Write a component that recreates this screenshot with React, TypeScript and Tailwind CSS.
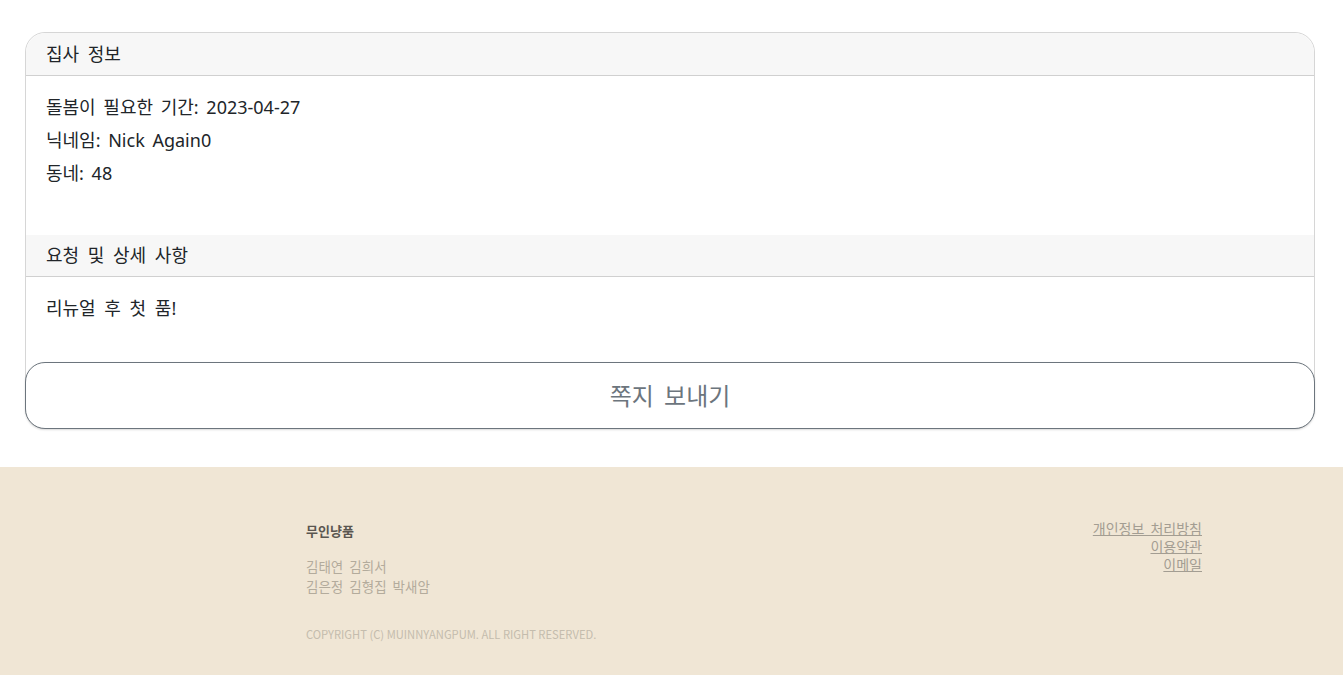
import React from "react";

const kr = { fontFamily: '"Noto Sans", "Noto Sans CJK KR", sans-serif' };
const krFooter = { fontFamily: '"Noto Sans CJK KR", sans-serif' };

export default function App() {
  return (
    <div className="min-h-[675px] bg-white" style={kr}>
      <div className="pt-[32px] pl-[25px] pr-[28px]">
        <div className="flex flex-col rounded-[20px] border border-[#d6d6d6] bg-white">
          <div className="flex h-[43px] items-center rounded-t-[20px] border-b border-[#d0d0d0] bg-[#f7f7f7] px-[20px] text-[18px] text-[#212529] [word-spacing:4px]">
            집사 정보
          </div>
          <div className="h-[159px] px-[20px] pt-[15px] text-[18px] leading-[33px] text-[#212529] [word-spacing:3px]">
            <div>돌봄이 필요한 기간: 2023-04-27</div>
            <div>닉네임: Nick Again0</div>
            <div>동네: 48</div>
          </div>
          <div className="flex h-[42px] items-center border-b border-[#d0d0d0] bg-[#f7f7f7] px-[20px] text-[18px] text-[#212529] [word-spacing:4px]">
            요청 및 상세 사항
          </div>
          <div className="h-[85px] px-[20px] pt-[15px] text-[18px] leading-[33px] text-[#212529] [word-spacing:4px]">
            <div>리뉴얼 후 첫 품!</div>
          </div>
          <button className="-mx-px -mb-px flex h-[67px] items-center justify-center rounded-[20px] border border-[#6c757d] bg-white text-[24px] text-[#6c757d] shadow-[0_1px_2px_rgba(0,0,0,0.15)] [word-spacing:4px]">
            쪽지 보내기
          </button>
        </div>
      </div>
      <footer className="mt-[38px] h-[209px] bg-[#f0e6d5]" style={krFooter}>
        <div className="flex justify-between pl-[306px] pr-[141px] pt-[52px]">
          <div>
            <div className="text-[13px] font-bold leading-[24px] text-[#5a5650]">무인냥품</div>
            <div className="mt-[13px] text-[13.5px] leading-[20px] text-[#b3ab9c]">
              <div>김태연&nbsp;&nbsp;김희서</div>
              <div>김은정&nbsp;&nbsp;김형집&nbsp;&nbsp;박새암</div>
            </div>
            <div className="mt-[29px] text-[11.2px] leading-[18px] text-[#c4bcad]">
              COPYRIGHT (C) MUINNYANGPUM. ALL RIGHT RESERVED.
            </div>
          </div>
          <div className="flex flex-col items-end text-[14px] leading-[18px] text-[#a39d92] [word-spacing:3px]">
            <a className="underline">개인정보 처리방침</a>
            <a className="underline">이용약관</a>
            <a className="underline">이메일</a>
          </div>
        </div>
      </footer>
    </div>
  );
}
